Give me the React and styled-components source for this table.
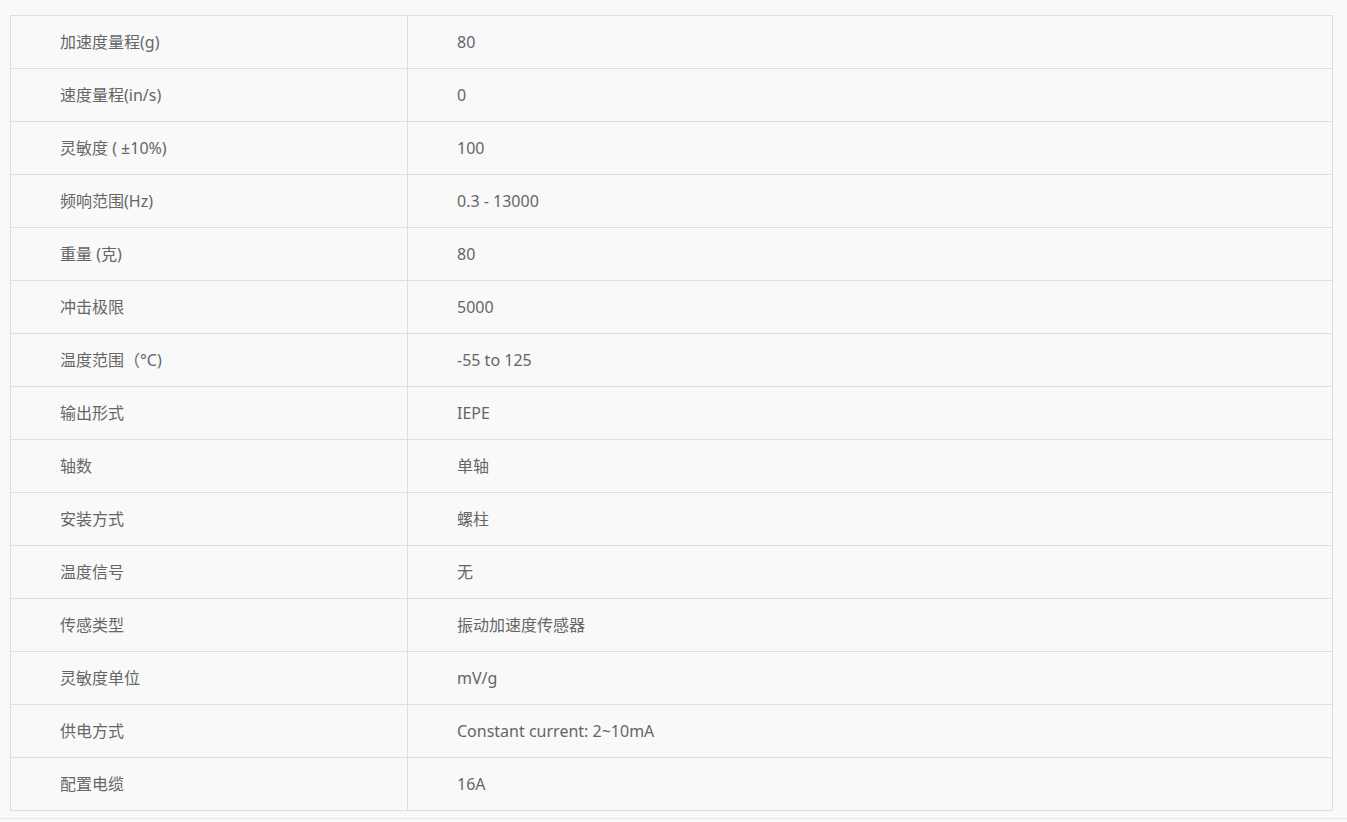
import React from "react";
import styled, { createGlobalStyle } from "styled-components";

const Global = createGlobalStyle`
  html, body { margin: 0; padding: 0; background: #f9f9f9; }
  body { font-family: "Noto Sans", "Noto Sans CJK SC", sans-serif; }
`;

const Wrap = styled.div`
  padding: 15px 14px 7px 10px;
  border-bottom: 1px solid #e8e8e8;
  width: 1323px;
`;

const Table = styled.table`
  width: 1323px;
  border-collapse: collapse;
  table-layout: fixed;
  background: #f9f9f9;
`;

const Cell = styled.td`
  border: 1px solid #dedede;
  height: 53px;
  padding: 0 0 0 49px;
  box-sizing: border-box;
  width: ${(p) => (p.$first ? "397px" : "auto")};
  color: #666;
  font-size: 16px;
  line-height: 20px;
  vertical-align: middle;
  white-space: nowrap;
`;

const rows = [
  ["加速度量程(g)", "80"],
  ["速度量程(in/s)", "0"],
  ["灵敏度 ( ±10%)", "100"],
  ["频响范围(Hz)", "0.3 - 13000"],
  ["重量 (克)", "80"],
  ["冲击极限", "5000"],
  ["温度范围（°C)", "-55 to 125"],
  ["输出形式", "IEPE"],
  ["轴数", "单轴"],
  ["安装方式", "螺柱"],
  ["温度信号", "无"],
  ["传感类型", "振动加速度传感器"],
  ["灵敏度单位", "mV/g"],
  ["供电方式", "Constant current: 2~10mA"],
  ["配置电缆", "16A"],
];

export default function App() {
  return (
    <>
      <Global />
      <Wrap>
        <Table>
          <tbody>
            {rows.map(([k, v]) => (
              <tr key={k}>
                <Cell $first>{k}</Cell>
                <Cell>{v}</Cell>
              </tr>
            ))}
          </tbody>
        </Table>
      </Wrap>
    </>
  );
}
